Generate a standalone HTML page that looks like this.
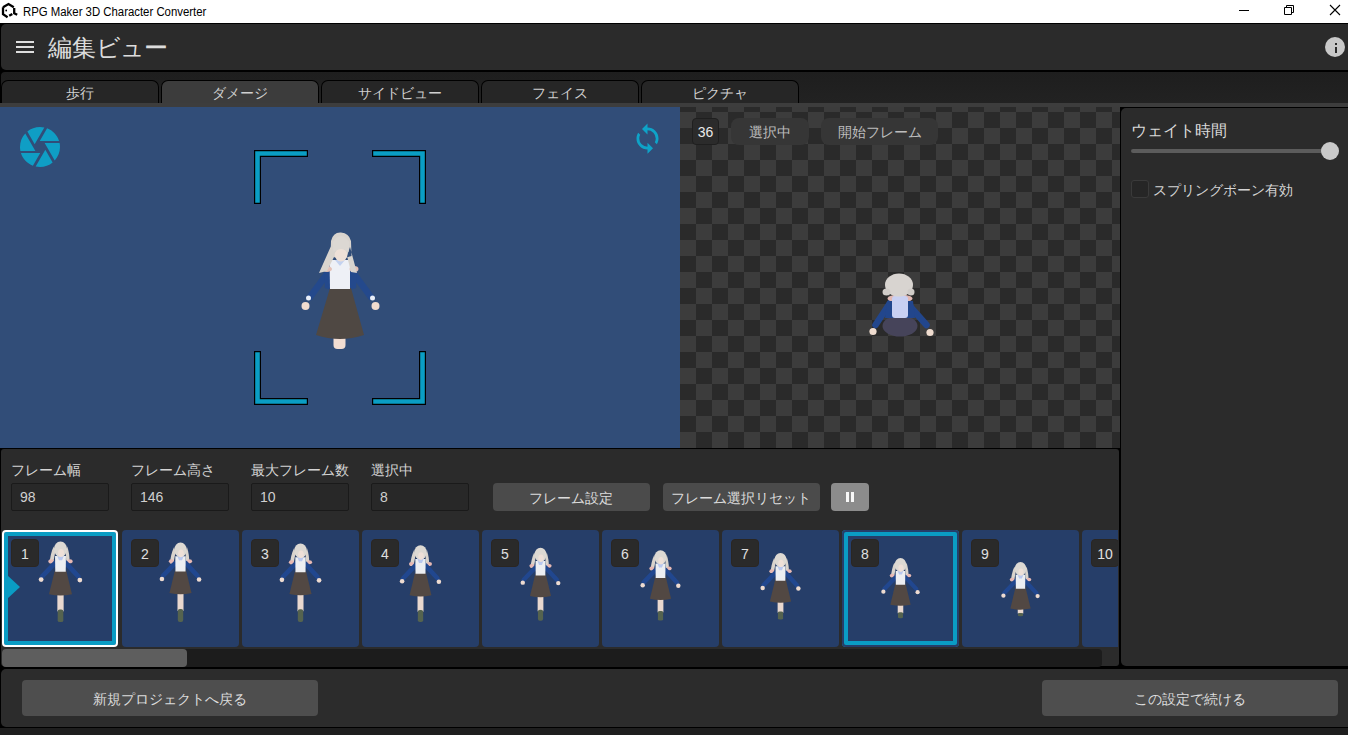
<!DOCTYPE html>
<html><head><meta charset="utf-8">
<style>
*{box-sizing:border-box;margin:0;padding:0}
html,body{width:1348px;height:735px;overflow:hidden;background:#000;font-family:"Liberation Sans",sans-serif}
.a{position:absolute}
.t{color:#d4d4d4;font-size:14px;white-space:nowrap;line-height:1}
#titlebar{left:0;top:0;width:1348px;height:23px;background:#fff}
#header{left:1px;top:24px;width:1347px;height:46px;background:#2b2b2b;border-radius:5px 0 0 5px}
#tabbar{left:1px;top:72px;width:1347px;height:31px;background:linear-gradient(#1e1e1e,#222);border-radius:4px 0 0 0}
.tab{top:80px;height:23px;width:158px;background:#262626;border:1px solid #000;border-bottom:none;border-radius:7px 7px 0 0;text-align:center;color:#d0d0d0;font-size:14px;line-height:24px}
.tab.act{background:#3c3c3c}
#tabline{left:0;top:103px;width:1348px;height:4px;background:#3d3d3d}
#view{left:0;top:107px;width:680px;height:341px;background:#314d78}
#checker{left:680px;top:107px;width:440px;height:341px;background:repeating-conic-gradient(#3c3c3c 0 25%,#2a2a2a 0 50%);background-size:32px 32px;background-position:0 -11px}
#rpanel{left:1121px;top:108px;width:227px;height:558px;background:#2b2b2b;border-radius:5px 0 0 5px}
#bpanel{left:1px;top:449px;width:1117.5px;height:217px;background:#2b2b2b;border-radius:3px}
#footer{left:1px;top:669px;width:1347px;height:58px;background:#2c2c2c;border-radius:5px 0 0 5px}
#bottomstrip{left:0;top:728px;width:1348px;height:7px;background:#1e1e1e}
.inp{height:28px;width:98px;background:#282828;border:1px solid #1a1a1a;border-radius:2px;color:#d0d0d0;font-size:14px;line-height:27px;padding-left:8px}
.btn{height:27px;background:#4b4b4b;border-radius:4px;color:#dcdcdc;font-size:14px;line-height:27px;text-align:center;padding-top:1px}
.pill{top:118px;height:27px;background:#363636;border-radius:8px;color:#bdbdbd;font-size:14px;line-height:27px;text-align:center;padding-top:1px}
.thumb{top:0;height:117px;width:117px;background:#263e69;border-radius:4px;overflow:hidden}
.badge{top:9px;left:9px;width:28px;height:28px;background:#2a2a2a;border-radius:4px;color:#e0e0e0;font-size:14px;line-height:29px;text-align:center;border:1px solid #2a2622}
.j{display:inline-block;width:1em;text-align:center;font-style:normal}
</style></head><body>
<svg width="0" height="0" style="position:absolute">
<defs>
<symbol id="gu" viewBox="0 0 60 90">
 <path d="M23.5,9 C21,14 20,20 19.5,25 L23,25 L25,14 Z" fill="#d9d3cc"/>
 <path d="M36.5,9 C38,14 39,19 38.5,24 L35.5,24 L35,14 Z" fill="#d9d3cc"/>
 <ellipse cx="21" cy="23" rx="2.6" ry="2" fill="#e7b9b4"/>
 <ellipse cx="39" cy="23" rx="2.6" ry="2" fill="#e7b9b4"/>
 <path d="M25,24.5 L12.5,37.5 M35,24.5 L47,37.5" stroke="#21478f" stroke-width="4.6" stroke-linecap="round"/>
 <circle cx="11.5" cy="40.5" r="2.3" fill="#eedbd0"/>
 <circle cx="48.5" cy="41" r="2.3" fill="#eedbd0"/>
   <path d="M24.5,32 L35.5,32 L41,54.5 Q30,57 19,54.5 Z" fill="#524843"/>
 <path d="M24.8,18 L35.2,18 L35,33 L25,33 Z" fill="#eceef2"/>
 <path d="M26.5,17 L33.5,17 L31.5,22 L28.5,22 Z" fill="#b9c8ef"/>
 <ellipse cx="30" cy="11.5" rx="6.3" ry="7.3" fill="#ddd9d3"/>
 <ellipse cx="30.5" cy="15" rx="2.8" ry="3.8" fill="#eee0d8"/>
</symbol>
<symbol id="gl" viewBox="0 0 60 90">
 <rect x="27" y="48" width="6" height="25" fill="#e9d8cf"/>
 <rect x="27.3" y="71" width="5.4" height="13.5" rx="2" fill="#55634f"/>
</symbol>
<symbol id="m" viewBox="0 0 100 130">
 <path d="M40,45 L20,72 M61,45 L81,72" stroke="#24498c" stroke-width="6.5" stroke-linecap="round"/>
 <path d="M34,44 L41,38 L41,65 L35,63 Z M67,44 L60,38 L60,65 L66,63 Z" fill="#24498c"/>
 <circle cx="18.5" cy="73" r="2.5" fill="#e8eef8"/>
 <circle cx="82.5" cy="73" r="2.5" fill="#e8eef8"/>
 <circle cx="15.5" cy="81" r="4" fill="#f0dccf"/>
 <circle cx="85.5" cy="81" r="4" fill="#f0dccf"/>
 <rect x="43.5" y="108" width="12" height="16" rx="4" fill="#f1ddd2"/>
 <path d="M40,63 L61,63 L74,110 Q50,118 26,110 Z" fill="#4f4843"/>
 <path d="M39.5,35 L60,35 L60,64 L40,64 Z" fill="#eef0f6"/>
 <path d="M45,35 L55,35 L50,41 Z" fill="#c4d2f0"/>
 <ellipse cx="37" cy="44" rx="5" ry="3" fill="#e3c0b6"/>
 <ellipse cx="64" cy="44" rx="4.5" ry="3" fill="#e3c0b6"/>
 <path d="M41,16 Q43,7 51,7.5 Q59,8 61,16 L61.5,31 Q51,35 40.5,31 Z M41,21 L45,30 L37,46 L29,48 Z M60,22 L57,31 L61,47 L67,48 Z" fill="#d9d4ce"/>
 <ellipse cx="51" cy="30" rx="6.3" ry="6.5" fill="#eee0d7"/>
 <path d="M42.5,17 Q51,5 59.5,17 L58.5,27 Q51,21 43.5,27 Z" fill="#dcd8d3"/>
</symbol>
<symbol id="d" viewBox="0 0 80 80">
 <path d="M30,41 L15.5,63 M47,41 L66.5,63" stroke="#22468c" stroke-width="6.5" stroke-linecap="round"/>
 <circle cx="13" cy="69.5" r="3.6" fill="#efdccf"/>
 <circle cx="70" cy="70.5" r="3.6" fill="#efdccf"/>
 <ellipse cx="40" cy="64" rx="17.5" ry="10.5" fill="#46445a"/>
 <ellipse cx="40" cy="36.5" rx="12.5" ry="4" fill="#e2b9b4"/>
 <path d="M27,39 L53,39 L55,56 L25,56 Z" fill="#22468c"/>
 <rect x="32" y="34" width="16" height="22" rx="3" fill="#c9d0f2"/>
 <ellipse cx="39" cy="23" rx="14" ry="11.5" fill="#d8d4d0"/>
 <ellipse cx="26.5" cy="30" rx="4" ry="3.5" fill="#d0ccc8"/>
 <ellipse cx="51" cy="30" rx="3.5" ry="3.5" fill="#d0ccc8"/>
</symbol>
</defs>
</svg>
<div class="a" id="titlebar">
 <svg class="a" style="left:0;top:0" width="20" height="22" viewBox="0 0 20 22"><g fill="none" stroke="#000" stroke-width="2.3" stroke-linejoin="miter"><path d="M3,7.2 L8.5,4 L13.8,7.2"/><path d="M3,7.2 L3,14.2 L7.6,17.2"/><path d="M9.2,15.8 L12.3,14"/><path d="M14.2,8 L14.2,13.2 L17.2,14.8"/></g><circle cx="6.2" cy="10.5" r="0.9" fill="#000"/></svg>
 <div class="a" style="left:23px;top:5px;font-size:12px;line-height:14px;color:#000;white-space:nowrap;transform:scaleX(0.948);transform-origin:0 0">RPG Maker 3D Character Converter</div>
 <div class="a" style="left:1239px;top:10px;width:10px;height:1px;background:#000"></div>
 <svg class="a" style="left:1283px;top:4px" width="13" height="12" viewBox="0 0 13 12"><path d="M1.5,3.5 H8.5 V10.5 H1.5 Z" fill="none" stroke="#000" stroke-width="1"/><path d="M3.5,3.5 V1.5 H10.5 V8.5 H8.5" fill="none" stroke="#000" stroke-width="1"/></svg>
 <svg class="a" style="left:1329px;top:4px" width="12" height="12" viewBox="0 0 12 12"><path d="M1,1 L11,11 M11,1 L1,11" stroke="#000" stroke-width="1.1"/></svg>
</div>
<div class="a" id="header">
 <div class="a" style="left:15px;top:17px;width:18px;height:2px;background:#dedede"></div>
 <div class="a" style="left:15px;top:22px;width:18px;height:2px;background:#dedede"></div>
 <div class="a" style="left:15px;top:27px;width:18px;height:2px;background:#dedede"></div>
 <div class="a t" style="left:47px;top:12px;font-size:24px;color:#dcdcdc"><i class="j"><i class="j">編</i></i><i class="j"><i class="j">集</i></i><i class="j"><i class="j">ビ</i></i><i class="j"><i class="j">ュ</i></i><i class="j"><i class="j">ー</i></i></div>
 <div class="a" style="left:1324px;top:13px;width:20px;height:20px;border-radius:50%;background:#c9c9c9"></div>
 <div class="a" style="left:1333.8px;top:18.5px;width:2.3px;height:2.5px;background:#2b2b2b"></div>
 <div class="a" style="left:1333.8px;top:22.5px;width:2.3px;height:6px;background:#2b2b2b"></div>
</div>
<div class="a" id="tabbar"></div>
<div class="a tab" style="left:1px"><i class="j"><i class="j">歩</i></i><i class="j"><i class="j">行</i></i></div>
<div class="a tab act" style="left:161px"><i class="j"><i class="j">ダ</i></i><i class="j"><i class="j">メ</i></i><i class="j"><i class="j">ー</i></i><i class="j"><i class="j">ジ</i></i></div>
<div class="a tab" style="left:321px"><i class="j"><i class="j">サ</i></i><i class="j"><i class="j">イ</i></i><i class="j"><i class="j">ド</i></i><i class="j"><i class="j">ビ</i></i><i class="j"><i class="j">ュ</i></i><i class="j"><i class="j">ー</i></i></div>
<div class="a tab" style="left:481px"><i class="j"><i class="j">フ</i></i><i class="j"><i class="j">ェ</i></i><i class="j"><i class="j">イ</i></i><i class="j"><i class="j">ス</i></i></div>
<div class="a tab" style="left:641px"><i class="j"><i class="j">ピ</i></i><i class="j"><i class="j">ク</i></i><i class="j"><i class="j">チ</i></i><i class="j"><i class="j">ャ</i></i></div>
<div class="a" id="tabline"></div>
<div class="a" id="view">
 <svg class="a" style="left:20px;top:20px" width="40" height="40" viewBox="2 2 20 20"><path fill="#0f9ec5" d="M13.73,15L9.83,21.76C10.53,21.91 11.25,22 12,22C14.4,22 16.6,21.15 18.32,19.75L14.66,13.4M2.46,15C3.38,17.92 5.61,20.26 8.45,21.34L12.12,15M8.54,12L4.64,5.25C3,7 2,9.39 2,12C2,12.68 2.07,13.35 2.2,14H9.69M21.8,10H14.31L14.6,10.5L19.36,18.75C21,16.97 22,14.6 22,12C22,11.31 21.930,10.64 21.8,10M21.54,9C20.62,6.07 18.39,3.740 15.55,2.66L11.88,9M9.4,10.5L14.17,2.24C13.47,2.09 12.75,2 12,2C9.6,2 7.4,2.84 5.68,4.25L9.34,10.6L9.4,10.5Z"/></svg>
 <svg class="a" style="left:631px;top:15px" width="33" height="33" viewBox="0 0 24 24"><path fill="#0ea3c8" d="M12,18A6,6 0 0,1 6,12C6,11 6.25,10.03 6.7,9.2L5.24,7.74C4.46,8.97 4,10.43 4,12A8,8 0 0,0 12,20V23L16,19L12,15M12,4V1L8,5L12,9V6A6,6 0 0,1 18,12C18,13 17.75,13.97 17.3,14.8L18.76,16.26C19.54,15.03 20,13.570 20,12A8,8 0 0,0 12,4Z"/></svg>
 <svg class="a" style="left:0;top:0" width="680" height="340" viewBox="0 107 680 340">
  <g fill="none" stroke-linecap="square" stroke-linejoin="miter">
   <path stroke="#000" stroke-width="7" d="M257.5,200.5 V153.5 H304.5 M375.5,153.5 H422.5 V200.5 M257.5,354.5 V401.5 H304.5 M375.5,401.5 H422.5 V354.5"/>
   <path stroke="#0a9ec4" stroke-width="4.6" d="M257.5,200.5 V153.5 H304.5 M375.5,153.5 H422.5 V200.5 M257.5,354.5 V401.5 H304.5 M375.5,401.5 H422.5 V354.5"/>
  </g>
  <use href="#m" x="290" y="225" width="100" height="130"/>
 </svg>
</div>
<div class="a" id="checker">
 <svg class="a" style="left:0;top:0" width="440" height="340" viewBox="680 107 440 340"><use href="#d" x="860" y="262" width="80" height="80"/></svg>
 <div class="a" style="left:12px;top:11px;width:27px;height:27px;background:#2b2b2b;border:1px solid #1f1f1f;border-radius:4px;color:#e8e8e8;font-size:14px;line-height:25px;text-align:center;padding-top:1px">36</div>
 <div class="a pill" style="left:51px;top:11px;width:78px"><i class="j"><i class="j">選</i></i><i class="j"><i class="j">択</i></i><i class="j"><i class="j">中</i></i></div>
 <div class="a pill" style="left:141px;top:11px;width:117px"><i class="j"><i class="j">開</i></i><i class="j"><i class="j">始</i></i><i class="j"><i class="j">フ</i></i><i class="j"><i class="j">レ</i></i><i class="j"><i class="j">ー</i></i><i class="j"><i class="j">ム</i></i></div>
</div>
<div class="a" id="rpanel">
 <div class="a t" style="left:10px;top:15px;font-size:16px;color:#dadada"><i class="j"><i class="j">ウ</i></i><i class="j"><i class="j">ェ</i></i><i class="j"><i class="j">イ</i></i><i class="j"><i class="j">ト</i></i><i class="j"><i class="j">時</i></i><i class="j"><i class="j">間</i></i></div>
 <div class="a" style="left:10px;top:41px;width:206px;height:4px;border-radius:2px;background:#5c5c5c"></div>
 <div class="a" style="left:200px;top:34px;width:18px;height:18px;border-radius:50%;background:#c9c9c9"></div>
 <div class="a" style="left:10px;top:72px;width:18px;height:18px;border-radius:3px;background:#262626;border:1px solid #3a3a3a"></div>
 <div class="a t" style="left:32px;top:75px;font-size:14px;color:#d4d4d4"><i class="j"><i class="j">ス</i></i><i class="j"><i class="j">プ</i></i><i class="j"><i class="j">リ</i></i><i class="j"><i class="j">ン</i></i><i class="j"><i class="j">グ</i></i><i class="j"><i class="j">ボ</i></i><i class="j"><i class="j">ー</i></i><i class="j"><i class="j">ン</i></i><i class="j"><i class="j">有</i></i><i class="j"><i class="j">効</i></i></div>
</div>
<div class="a" id="bpanel">
 <div class="a t" style="left:10px;top:14px"><i class="j"><i class="j">フ</i></i><i class="j"><i class="j">レ</i></i><i class="j"><i class="j">ー</i></i><i class="j"><i class="j">ム</i></i><i class="j"><i class="j">幅</i></i></div>
 <div class="a t" style="left:130px;top:14px"><i class="j"><i class="j">フ</i></i><i class="j"><i class="j">レ</i></i><i class="j"><i class="j">ー</i></i><i class="j"><i class="j">ム</i></i><i class="j"><i class="j">高</i></i><i class="j"><i class="j">さ</i></i></div>
 <div class="a t" style="left:250px;top:14px"><i class="j"><i class="j">最</i></i><i class="j"><i class="j">大</i></i><i class="j"><i class="j">フ</i></i><i class="j"><i class="j">レ</i></i><i class="j"><i class="j">ー</i></i><i class="j"><i class="j">ム</i></i><i class="j"><i class="j">数</i></i></div>
 <div class="a t" style="left:370px;top:14px"><i class="j"><i class="j">選</i></i><i class="j"><i class="j">択</i></i><i class="j"><i class="j">中</i></i></div>
 <div class="a inp" style="left:10px;top:34px">98</div>
 <div class="a inp" style="left:130px;top:34px">146</div>
 <div class="a inp" style="left:250px;top:34px">10</div>
 <div class="a inp" style="left:370px;top:34px">8</div>
 <div class="a btn" style="left:491.5px;top:34px;width:157px;height:28px;line-height:28px"><i class="j"><i class="j">フ</i></i><i class="j"><i class="j">レ</i></i><i class="j"><i class="j">ー</i></i><i class="j"><i class="j">ム</i></i><i class="j"><i class="j">設</i></i><i class="j"><i class="j">定</i></i></div>
 <div class="a btn" style="left:661.5px;top:34px;width:157px;height:28px;line-height:28px"><i class="j"><i class="j">フ</i></i><i class="j"><i class="j">レ</i></i><i class="j"><i class="j">ー</i></i><i class="j"><i class="j">ム</i></i><i class="j"><i class="j">選</i></i><i class="j"><i class="j">択</i></i><i class="j"><i class="j">リ</i></i><i class="j"><i class="j">セ</i></i><i class="j"><i class="j">ッ</i></i><i class="j"><i class="j">ト</i></i></div>
 <div class="a btn" style="left:830px;top:34px;width:37.5px;height:28px;background:#8c8c8c"><div class="a" style="left:15px;top:9px;width:3px;height:10px;background:#f8f8f8"></div><div class="a" style="left:20px;top:9px;width:3px;height:10px;background:#f8f8f8"></div></div>
</div>
<div class="a" style="left:0;top:530px;width:1118px;height:117px;overflow:hidden">
<div class="a thumb" style="left:2px;border:2px solid #fff;box-shadow:inset 0 0 0 4px #0a9cc4;width:116px;"><svg class="a" style="left:-2px;top:-2px" width="117" height="117" viewBox="0 0 117 117"><g transform="translate(27.09,14.20) scale(1.047,0.921)"><use href="#gl" width="60" height="90"/></g><g transform="translate(27.09,7.19) scale(1.047)"><use href="#gu" width="60" height="90"/></g></svg><div class="a" style="left:3px;top:43px;width:0;height:0;border-top:12.5px solid transparent;border-bottom:12.5px solid transparent;border-left:13px solid #0a9cc4"></div><div class="a badge" style="left:7px;top:7px">1</div></div>
<div class="a thumb" style="left:122px;"><svg class="a" style="left:0;top:0" width="117" height="117" viewBox="0 0 117 117"><g transform="translate(28.38,10.41) scale(1.004,0.966)"><use href="#gl" width="60" height="90"/></g><g transform="translate(28.38,8.28) scale(1.004)"><use href="#gu" width="60" height="90"/></g></svg><div class="a badge">2</div></div>
<div class="a thumb" style="left:242px;"><svg class="a" style="left:0;top:0" width="117" height="117" viewBox="0 0 117 117"><g transform="translate(28.38,13.04) scale(1.004,0.934)"><use href="#gl" width="60" height="90"/></g><g transform="translate(28.38,9.18) scale(1.004)"><use href="#gu" width="60" height="90"/></g></svg><div class="a badge">3</div></div>
<div class="a thumb" style="left:362px;"><svg class="a" style="left:0;top:0" width="117" height="117" viewBox="0 0 117 117"><g transform="translate(28.68,16.82) scale(0.994,0.890)"><use href="#gl" width="60" height="90"/></g><g transform="translate(28.68,11.03) scale(0.994)"><use href="#gu" width="60" height="90"/></g></svg><div class="a badge">4</div></div>
<div class="a thumb" style="left:482px;"><svg class="a" style="left:0;top:0" width="117" height="117" viewBox="0 0 117 117"><g transform="translate(29.74,21.64) scale(0.959,0.817)"><use href="#gl" width="60" height="90"/></g><g transform="translate(29.74,13.79) scale(0.959)"><use href="#gu" width="60" height="90"/></g></svg><div class="a badge">5</div></div>
<div class="a thumb" style="left:602px;"><svg class="a" style="left:0;top:0" width="117" height="117" viewBox="0 0 117 117"><g transform="translate(29.62,29.70) scale(0.963,0.721)"><use href="#gl" width="60" height="90"/></g><g transform="translate(29.62,16.27) scale(0.963)"><use href="#gu" width="60" height="90"/></g></svg><div class="a badge">6</div></div>
<div class="a thumb" style="left:722px;"><svg class="a" style="left:0;top:0" width="117" height="117" viewBox="0 0 117 117"><g transform="translate(29.56,40.16) scale(0.965,0.583)"><use href="#gl" width="60" height="90"/></g><g transform="translate(29.56,18.96) scale(0.965)"><use href="#gu" width="60" height="90"/></g></svg><div class="a badge">7</div></div>
<div class="a thumb" style="left:842px;box-shadow:inset 0 0 0 2px #263e69,inset 0 0 0 6px #0a9cc4;"><svg class="a" style="left:0;top:0" width="117" height="117" viewBox="0 0 117 117"><g transform="translate(30.74,51.49) scale(0.925,0.434)"><use href="#gl" width="60" height="90"/></g><g transform="translate(30.74,24.24) scale(0.925)"><use href="#gu" width="60" height="90"/></g></svg><div class="a badge">8</div></div>
<div class="a thumb" style="left:962px;"><svg class="a" style="left:0;top:0" width="117" height="117" viewBox="0 0 117 117"><g transform="translate(30.79,66.68) scale(0.924,0.231)"><use href="#gl" width="60" height="90"/></g><g transform="translate(30.79,28.24) scale(0.924)"><use href="#gu" width="60" height="90"/></g></svg><div class="a badge">9</div></div>
<div class="a thumb" style="left:1082px;"><svg class="a" style="left:0;top:0" width="117" height="117" viewBox="0 0 117 117"><g transform="translate(30.85,76.26) scale(0.922,0.103)"><use href="#gl" width="60" height="90"/></g><g transform="translate(30.85,30.85) scale(0.922)"><use href="#gu" width="60" height="90"/></g></svg><div class="a badge">10</div></div>
</div>
<div class="a" style="left:2px;top:649px;width:1100px;height:18px;border-radius:4px;background:#1c1c1c"></div>
<div class="a" style="left:2px;top:649px;width:185px;height:18px;border-radius:4px;background:#5e5e5e"></div>
<div class="a" id="footer">
 <div class="a btn" style="left:21px;top:11px;width:296px;height:36px;line-height:36px;background:#4e4e4e"><i class="j"><i class="j">新</i></i><i class="j"><i class="j">規</i></i><i class="j"><i class="j">プ</i></i><i class="j"><i class="j">ロ</i></i><i class="j"><i class="j">ジ</i></i><i class="j"><i class="j">ェ</i></i><i class="j"><i class="j">ク</i></i><i class="j"><i class="j">ト</i></i><i class="j"><i class="j">へ</i></i><i class="j"><i class="j">戻</i></i><i class="j"><i class="j">る</i></i></div>
 <div class="a btn" style="left:1041px;top:11px;width:296px;height:36px;line-height:36px;background:#4e4e4e"><i class="j"><i class="j">こ</i></i><i class="j"><i class="j">の</i></i><i class="j"><i class="j">設</i></i><i class="j"><i class="j">定</i></i><i class="j"><i class="j">で</i></i><i class="j"><i class="j">続</i></i><i class="j"><i class="j">け</i></i><i class="j"><i class="j">る</i></i></div>
</div>
<div class="a" id="bottomstrip"></div>
</body></html>
